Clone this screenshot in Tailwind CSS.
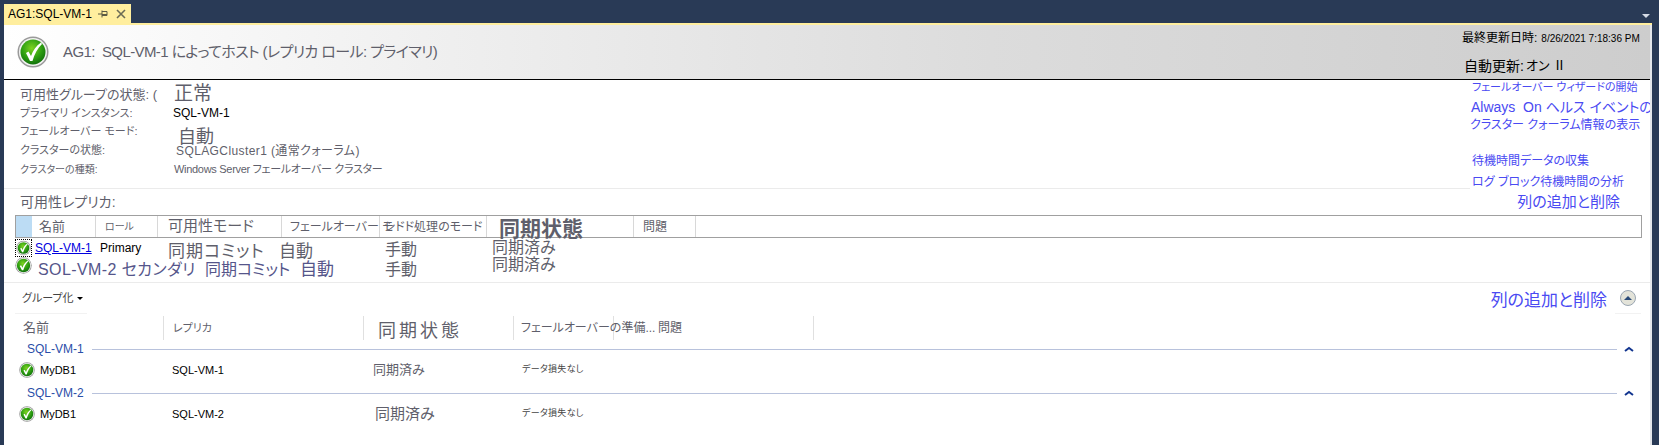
<!DOCTYPE html>
<html lang="ja">
<head>
    <meta charset="UTF-8">
    <title>AG1:SQL-VM-1</title>
    <script src="https://cdn.jsdelivr.net/npm/@tailwindcss/browser@4"></script>
</head>
<body class="w-[1659px] h-[445px] overflow-hidden bg-[#293a56] font-['Liberation_Sans','Noto_Sans_CJK_JP',sans-serif] [font-feature-settings:'palt'] text-[#5f5f6b]">
    <svg class="absolute w-0 h-0">
        <defs>
            <radialGradient id="greenBall" cx="45%" cy="35%" r="70%">
                <stop offset="0%" stop-color="#7ed321"/>
                <stop offset="55%" stop-color="#2fa012"/>
                <stop offset="100%" stop-color="#0d6a0a"/>
            </radialGradient>
            <symbol id="okIcon" viewBox="0 0 32 32">
                <circle cx="16" cy="16" r="15.5" fill="#9a9a9a"/>
                <circle cx="16" cy="16" r="14" fill="#f2f2f2"/>
                <circle cx="16" cy="16" r="12.5" fill="url(#greenBall)"/>
                <path d="M9 17 L11.5 15.5 L14 20 C16 14.5 19 10 24 6.5 L25 8 C20.5 12.5 17.5 18 15.5 25 L13 25 Z" fill="#fff"/>
            </symbol>
        </defs>
    </svg>

    <!-- Tab strip -->
    <div class="h-[23px] pt-[4px] flex justify-between">
        <div class="w-[127px] h-[19px] ml-[4px] bg-[#ffee9e] flex items-center pl-[4px] text-[12px] text-black">
            <span class="w-[89px] whitespace-nowrap">AG1:SQL-VM-1</span>
            <svg class="w-[12px] h-[12px]" viewBox="0 0 12 12" fill="none" stroke="#5b5b45"><path d="M1 6h4M5 2.500v7M5 3.500h5v4H5M5 6.500h5" /></svg>
            <svg class="w-[10px] h-[10px] ml-[7px]" viewBox="0 0 10 10" stroke="#6b6b55" stroke-width="1.600"><path d="M1 1l8 8M9 1l-8 8"/></svg>
        </div>
        <div class="w-0 h-0 mt-[10px] mr-[9px] border-x-[4px] border-x-transparent border-t-[4px] border-t-[#d5dbe6]"></div>
    </div>
    <div class="h-[2px] ml-[4px] mr-[7px] bg-[#ffee9e]"></div>

    <main class="ml-[4px] mr-[7px] h-[420px] bg-white border-r-2 border-[#e4e6ea]">
        <!-- Status header -->
        <header class="h-[55px] border-b border-black flex justify-between bg-gradient-to-r from-white via-[#dcdcdc] via-60% to-[#cdcdcd]">
            <div class="flex items-center pl-[13px] gap-[14px]">
                <svg class="w-[32px] h-[32px]"><use href="#okIcon"/></svg>
                <span class="text-[15px] tracking-[-0.6px] whitespace-nowrap">AG1:&nbsp; SQL-VM-1 によってホスト (レプリカ ロール: プライマリ)</span>
            </div>
            <div class="w-[190px] pt-[5px] pl-[2px] text-black">
                <div class="h-[16px] flex items-center whitespace-nowrap text-[12px]">最終更新日時:<span class="text-[10px] ml-[4px]">8/26/2021 7:18:36 PM</span></div>
                <div class="h-[16px] mt-[12px] ml-[2px] flex items-center whitespace-nowrap text-[14px]">自動更新:<span class="ml-[2px] text-[13px]">オン Ⅱ</span></div>
            </div>
        </header>

        <!-- Summary -->
        <section class="h-[109px] border-b border-[#ebebeb] flex justify-between">
            <div class="pt-[5px] pl-[16px]">
                <div class="h-[19px] flex items-center whitespace-nowrap"><span class="w-[154px] text-[13px]">可用性グループの状態: (</span><span class="text-[19px]">正常</span></div>
                <div class="h-[18px] flex items-center whitespace-nowrap text-[11px]"><span class="w-[153px]">プライマリ インスタンス:</span><span class="text-[12px] text-black font-medium">SQL-VM-1</span></div>
                <div class="h-[19px] flex items-center whitespace-nowrap"><span class="w-[158px] text-[11px]">フェールオーバー モード:</span><span class="text-[18px] mt-[10px] h-[20px] leading-[20px]">自動</span></div>
                <div class="h-[19px] flex items-center whitespace-nowrap"><span class="w-[156px] text-[11px]">クラスターの状態:</span><span class="text-[12px] tracking-[0.4px]">SQLAGCluster1 (通常クォーラム)</span></div>
                <div class="h-[19px] flex items-center whitespace-nowrap"><span class="w-[154px] text-[10px]">クラスターの種類:</span><span class="text-[11px] tracking-[-0.3px]">Windows Server フェールオーバー クラスター</span></div>
            </div>
            <nav class="w-[180px] h-[112px] relative bg-white text-[#4a4af2] whitespace-nowrap overflow-hidden">
                <a class="block h-[14px] leading-[14px] pl-[2px] text-[11px]">フェールオーバー ウィザードの開始</a>
                <a class="block h-[26px] leading-[26px] pl-[1px] text-[14px]">Always&nbsp; On ヘルス イベントの表示</a>
                <a class="block h-[10px] leading-[10px] text-[12px]">クラスター クォーラム情報の表示</a>
                <a class="block h-[18px] leading-[18px] mt-[22px] pl-[2px] text-[12px]">待機時間データの収集</a>
                <a class="block h-[24px] leading-[24px] pl-[2px] text-[12px]">ログ ブロック待機時間の分析</a>
            </nav>
        </section>

        <!-- Availability replicas -->
        <section class="h-[94px] border-b border-[#ebebeb]">
            <div class="h-[26px] pl-[16px] pr-[30px] flex items-center justify-between">
                <span class="text-[14px]">可用性レプリカ:</span>
                <a class="text-[15px] text-[#4a4af2]">列の追加と削除</a>
            </div>
            <div class="h-[23px] ml-[11px] mr-[8px] border border-[#a0a0a0] grid grid-rows-[21px] grid-cols-[16px_64px_62px_124px_97px_108px_147px_62px_1fr] whitespace-nowrap">
                <div class="bg-[#bcdcf4]"></div>
                <div class="border-r border-[#d8d8d8] pl-[7px] flex items-center text-[13px]">名前</div>
                <div class="border-r border-[#d8d8d8] pl-[9px] flex items-center text-[10px]">ロール</div>
                <div class="border-r border-[#d8d8d8] pl-[10px] flex items-center text-[15px]">可用性モード</div>
                <div class="pl-[8px] flex items-center text-[12px]">フェールオーバー モ</div>
                <div class="border-x border-[#d8d8d8] flex items-center text-[12px] pl-[4px]">シドド処理のモード</div>
                <div class="border-r border-[#d8d8d8] pl-[12px] flex items-center text-[21px] font-bold"><span class="mt-[4px] leading-none">同期状態</span></div>
                <div class="border-r border-[#d8d8d8] pl-[9px] flex items-center text-[12px]">問題</div>
                <div></div>
            </div>
            <div class="h-[20px] ml-[11px] flex items-center whitespace-nowrap">
                <div class="w-[17px] h-[18px] shrink-0 border border-dotted border-black flex items-center justify-center"><svg class="w-[15px] h-[16px]"><use href="#okIcon"/></svg></div>
                <a class="ml-[3px] w-[65px] shrink-0 text-[12px] text-[#0000e0] underline">SQL-VM-1</a>
                <span class="w-[68px] shrink-0 text-[12px] text-black">Primary</span>
                <span class="w-[111px] shrink-0 text-[17px] tracking-[1px] mt-[8px]">同期コミット</span>
                <span class="w-[106px] shrink-0 text-[17px] mt-[8px]">自動</span>
                <span class="w-[107px] shrink-0 text-[16px] mt-[4px]">手動</span>
                <span class="text-[16px]">同期済み</span>
            </div>
            <div class="h-[20px] ml-[11px] flex items-center whitespace-nowrap text-[#55558a]">
                <svg class="w-[17px] h-[17px] shrink-0 -mt-[6px]"><use href="#okIcon"/></svg>
                <span class="ml-[6px] w-[167px] shrink-0 text-[16px] tracking-[0.4px] mt-[4px]">SOL-VM-2 セカンダリ</span>
                <span class="w-[95px] shrink-0 text-[16px] mt-[4px]">同期コミット</span>
                <span class="w-[85px] shrink-0 text-[17px] mt-[4px]">自動</span>
                <span class="w-[107px] shrink-0 text-[16px] text-[#5f5f6b] mt-[4px]">手動</span>
                <span class="text-[16px] text-[#5f5f6b] -mt-[6px]">同期済み</span>
            </div>
        </section>

        <!-- Databases -->
        <section class="whitespace-nowrap">
            <div class="h-[31px] flex items-center justify-between">
                <div class="w-[72px] h-[31px] ml-[11px] border-b border-[#f2f2f2] flex items-center pl-[7px] text-[11px] text-[#444]">グループ化<span class="ml-[3px] w-0 h-0 border-x-[3px] border-x-transparent border-t-[3px] border-t-black"></span></div>
                <div class="flex items-center h-[31px]">
                    <a class="text-[17px] text-[#4a4af2] pt-[5px]">列の追加と削除</a>
                    <div class="w-[26px] h-[31px] ml-[8px] mr-[9px] border-b border-[#f2f2f2] flex items-center justify-center">
                        <div class="w-[16px] h-[16px] rounded-full bg-[#e3e3d9] border border-[#9aa6b2] flex items-center justify-center"><span class="w-0 h-0 border-x-[4px] border-x-transparent border-b-[4px] border-b-[#2a4a78]"></span></div>
                    </div>
                </div>
            </div>
            <div class="h-[24px] mt-[2px] ml-[9px] grid grid-rows-[24px] grid-cols-[151px_200px_150px_100px_200px_1fr]">
                <div class="border-r border-[#e0e0e0] pl-[10px] flex items-center text-[13px]">名前</div>
                <div class="border-r border-[#e0e0e0] pl-[9px] flex items-center text-[11px]">レプリカ</div>
                <div class="border-r border-[#e0e0e0] pl-[14px] flex items-center text-[18px] tracking-[3px]"><span class="mt-[6px] leading-none">同期状態</span></div>
                <div class="border-r border-[#e0e0e0] pl-[7px] flex items-center text-[12px]">フェールオーバーの準備...</div>
                <div class="border-r border-[#e0e0e0] pl-[44px] flex items-center text-[12px]">問題</div>
                <div></div>
            </div>
            <div class="h-[18px] ml-[23px] mr-[33px] flex items-center text-[12px] text-[#2a4ea8]">SQL-VM-1<div class="flex-1 ml-[8px] h-px bg-[#b8c2dc]"></div><svg class="w-[10px] h-[6px] -mr-[17px] ml-[7px]" viewBox="0 0 10 6" fill="none" stroke="#12358f" stroke-width="2"><path d="M1 5l4-3 4 3"/></svg></div>
            <div class="h-[24px] ml-[15px] flex items-center text-[11px] text-black">
                <svg class="w-[16px] h-[16px] shrink-0"><use href="#okIcon"/></svg>
                <span class="ml-[5px] w-[132px] shrink-0">MyDB1</span>
                <span class="w-[201px] shrink-0">SQL-VM-1</span>
                <span class="w-[149px] shrink-0 text-[13px] text-[#5f5f6b]">同期済み</span>
                <span class="text-[9px] tracking-[0.3px] text-[#444]">データ損失なし</span>
            </div>
            <div class="h-[18px] mt-[2px] ml-[23px] mr-[33px] flex items-center text-[12px] text-[#2a4ea8]">SQL-VM-2<div class="flex-1 ml-[8px] h-px bg-[#b8c2dc]"></div><svg class="w-[10px] h-[6px] -mr-[17px] ml-[7px]" viewBox="0 0 10 6" fill="none" stroke="#12358f" stroke-width="2"><path d="M1 5l4-3 4 3"/></svg></div>
            <div class="h-[24px] ml-[15px] flex items-center text-[11px] text-black">
                <svg class="w-[16px] h-[16px] shrink-0"><use href="#okIcon"/></svg>
                <span class="ml-[5px] w-[132px] shrink-0">MyDB1</span>
                <span class="w-[203px] shrink-0">SQL-VM-2</span>
                <span class="w-[147px] shrink-0 text-[15px] text-[#5f5f6b]">同期済み</span>
                <span class="text-[9px] tracking-[0.3px] text-[#444]">データ損失なし</span>
            </div>
        </section>
    </main>
</body>
</html>
